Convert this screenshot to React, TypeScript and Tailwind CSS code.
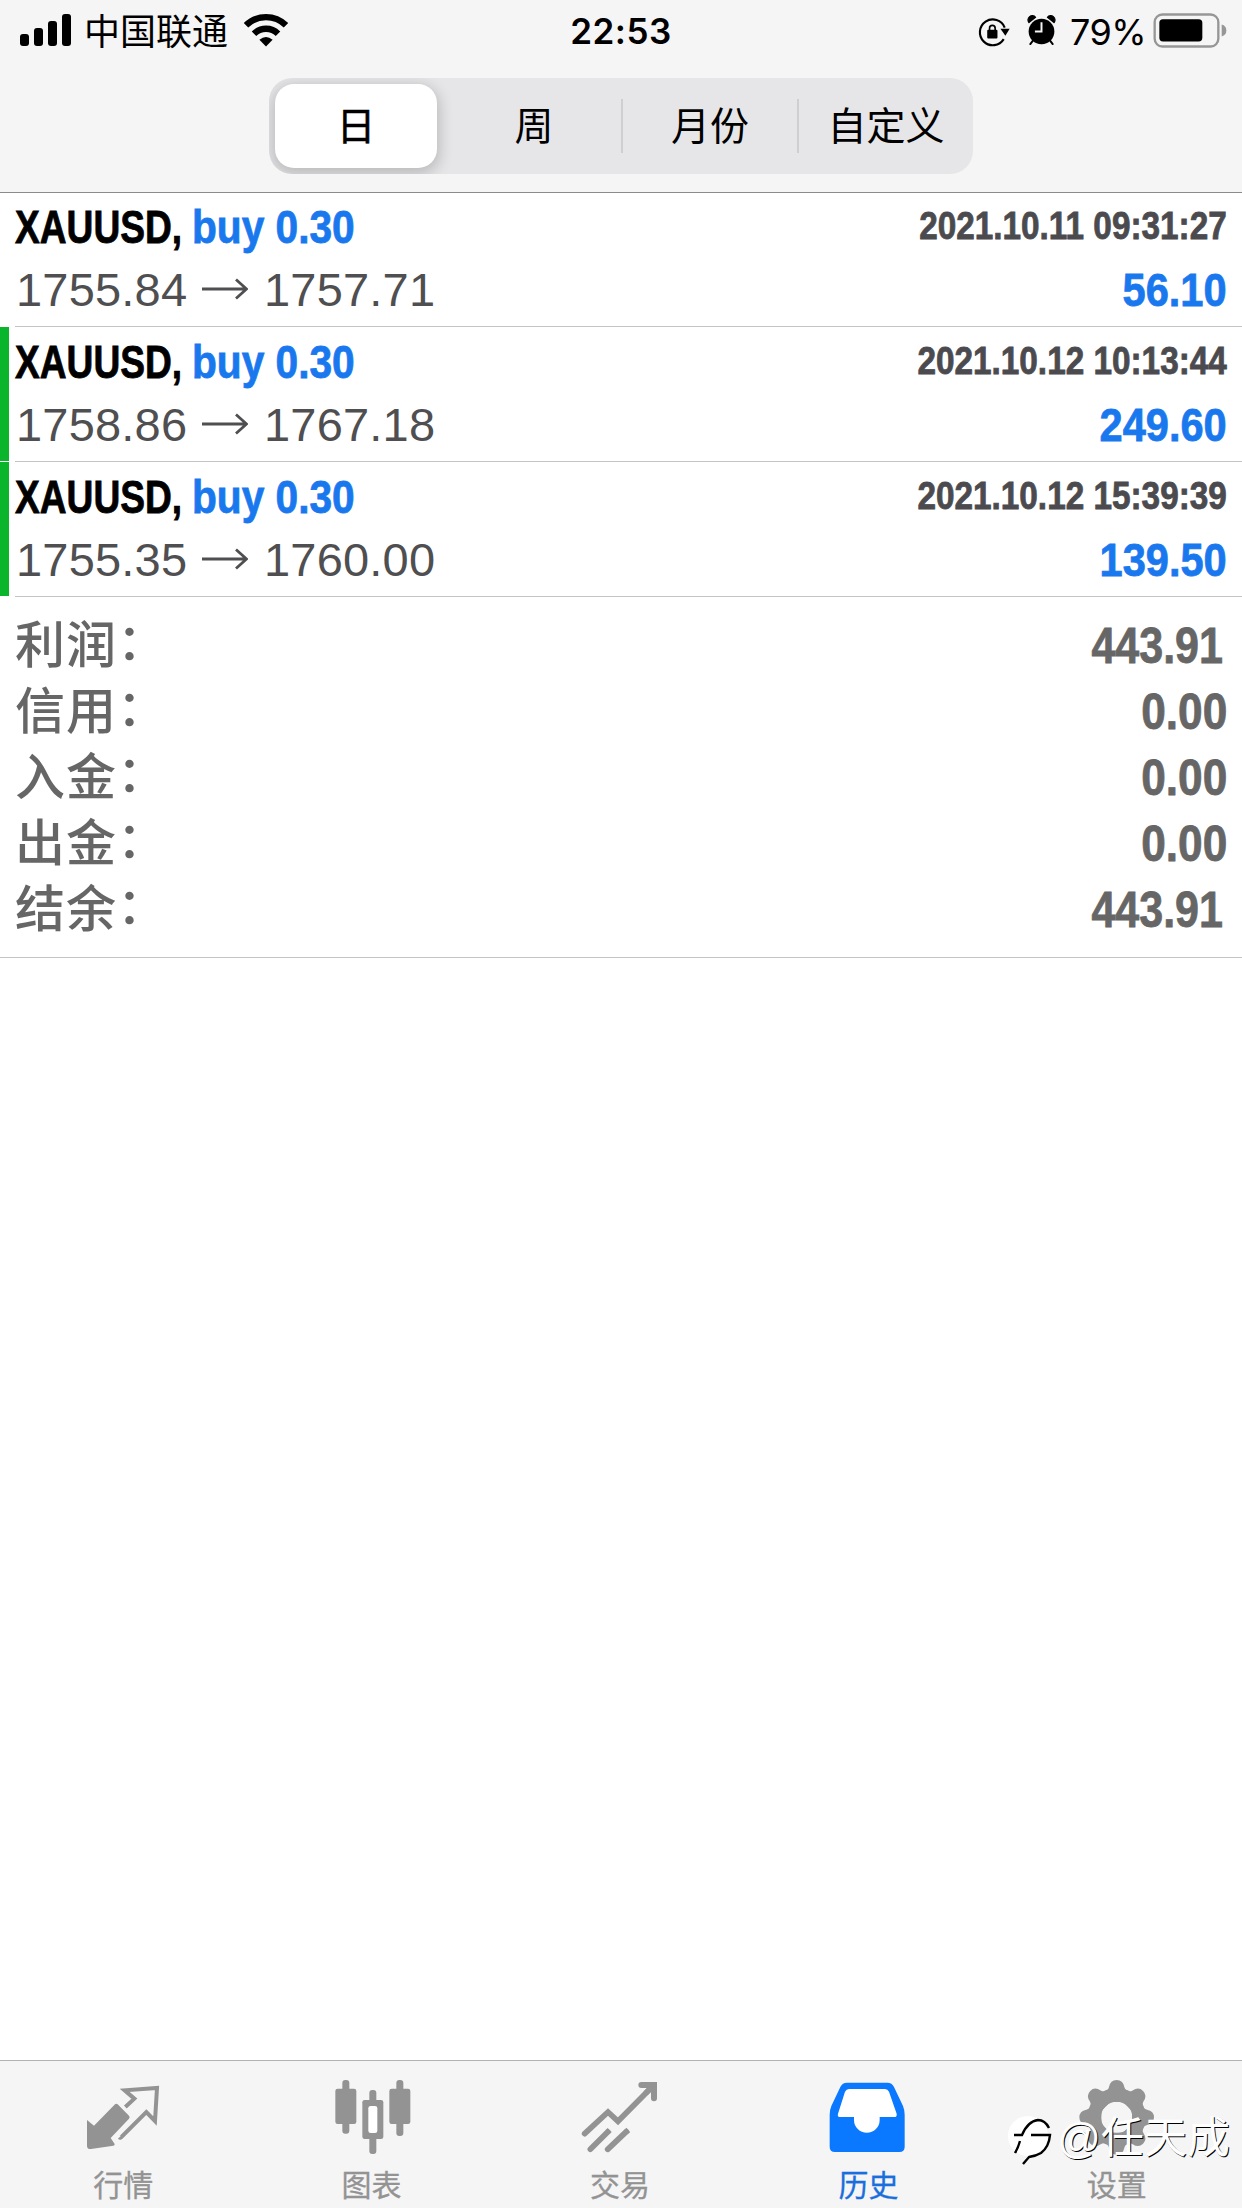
import type { ReactNode } from "react";
import clsx from "clsx";

interface Deal {
  symbol: string; side: string; open: string; close: string;
  time: string; profit: string; marked: boolean;
}

const deals: Deal[] = [
  { symbol: "XAUUSD,", side: "buy 0.30", open: "1755.84", close: "1757.71", time: "2021.10.11 09:31:27", profit: "56.10",  marked: false },
  { symbol: "XAUUSD,", side: "buy 0.30", open: "1758.86", close: "1767.18", time: "2021.10.12 10:13:44", profit: "249.60", marked: true },
  { symbol: "XAUUSD,", side: "buy 0.30", open: "1755.35", close: "1760.00", time: "2021.10.12 15:39:39", profit: "139.50", marked: true },
];

const summary = [
  { label: "利润", value: "443.91" },
  { label: "信用", value: "0.00" },
  { label: "入金", value: "0.00" },
  { label: "出金", value: "0.00" },
  { label: "结余", value: "443.91" },
];

const periods = ["日", "周", "月份", "自定义"];

function StatusBar() {
  return (
    <div className="flex h-[62px] items-center text-black">
      <div className="flex flex-1 items-center pl-5">
        <svg width="51" height="34" viewBox="0 0 51 34" className="-mt-0.5 shrink-0">
          <rect x="0" y="21" width="9" height="12" rx="3" />
          <rect x="14" y="15" width="9" height="18" rx="3" />
          <rect x="28" y="8" width="9" height="25" rx="3" />
          <rect x="42" y="1" width="9" height="32" rx="3" />
        </svg>
        <span className="mt-[3px] ml-[13px] text-[36px] leading-[44px] whitespace-nowrap">中国联通</span>
        <svg width="46" height="34" viewBox="0 0 46 34" className="ml-[15px] -mt-0.5 shrink-0" fill="none" stroke="black" strokeWidth="6.4">
          <path d="M3 12.3a28.5 28.5 0 0 1 40 0" />
          <path d="M11 20.7a17 17 0 0 1 24 0" />
          <path d="M23 33.5l-6.600-6.800q6.600-5.400 13.200 0z" fill="black" stroke="none" />
        </svg>
      </div>
      <span className="mr-[5px] font-['Inter'] text-[35px] font-semibold tracking-[0.5px]">22:53</span>
      <div className="flex flex-1 items-center justify-end pr-[15px]">
        <svg width="33" height="33" viewBox="50 30 100 100">
          <path d="M131 103A39 39 0 1 1 134 68" fill="none" stroke="black" strokeWidth="6.500" />
          <path d="M121 72h28l-13 21z" />
          <rect x="81" y="75" width="31" height="26" rx="3" />
          <path d="M88 79v-9a8.500 8.500 0 0 1 17 0v9" fill="none" stroke="black" strokeWidth="5" />
        </svg>
        <svg width="29" height="33" viewBox="200 30 86 100" className="ml-[17px] mt-px">
          <circle cx="243" cy="80" r="39" />
          <path d="M205 53a12 12 0 0 1 20-16zM281 53a12 12 0 0 0-20-16z" stroke="black" strokeWidth="4" strokeLinejoin="round" />
          <path d="M217 108l-8 10M269 108l8 10" stroke="black" strokeWidth="6" strokeLinecap="round" />
          <path d="M243 52v28h-20" fill="none" stroke="#f5f5f5" strokeWidth="6" />
        </svg>
        <span className="mt-0.5 ml-[14px] w-[78px] font-['Inter'] text-[36px] tracking-[-0.5px] whitespace-nowrap">79%</span>
        <svg width="74" height="37" viewBox="578 20 222 110" className="ml-[5px] -mt-0.5">
          <rect x="583" y="27" width="191" height="96" rx="23" fill="none" stroke="#969696" strokeWidth="7" />
          <rect x="597" y="41" width="129" height="67" rx="11" />
          <path d="M784 57q14 4 14 18t-14 18z" fill="#969696" />
        </svg>
      </div>
    </div>
  );
}

function PeriodSwitch() {
  return (
    <div className="mx-auto mt-4 flex h-24 w-[704px] overflow-hidden rounded-[23px] bg-[#e6e6e8] text-[39px] text-black">
      {periods.map((p, i) => (
        <div key={p} className="flex flex-1 items-center">
          {i === 0 ? (
            <div className="ml-[6px] flex h-[84px] w-[162px] items-center justify-center rounded-[19px] bg-white pt-[3px] shadow-[0_4px_14px_3px_rgba(0,0,0,0.18)] [-webkit-text-stroke:0.5px_black]">
              {p}
            </div>
          ) : (
            <>
              <div className={clsx("h-[54px] w-0.5", i > 1 && "bg-[#cfcfd2]")} />
              <div className="flex-1 pt-[3px] text-center">{p}</div>
            </>
          )}
        </div>
      ))}
    </div>
  );
}

function DealRow({ deal, first }: { deal: Deal; first: boolean }) {
  return (
    <div className={clsx("flex gap-[6px]", first ? "h-[134px]" : "h-[135px]")}>
      <div className={clsx("mb-px w-[9px]", deal.marked && "bg-[#0bb52b]")} />
      <div className="flex flex-1 flex-col justify-end border-b border-[#c4c4c6] pr-[15px] pb-[5px] text-[47px] leading-[63px] whitespace-nowrap">
        <div className="flex justify-between font-bold [-webkit-text-stroke:0.8px_currentColor]">
          <div className="flex">
            <span className="w-[177px]">
              <span className="inline-block origin-left scale-x-[0.79] text-black">{deal.symbol}</span>
            </span>
            <span className="inline-block origin-left scale-x-[0.865] text-[#1a78ee]">{deal.side}</span>
          </div>
          <span className="inline-block origin-right scale-x-[0.877] text-[38px] text-[#4b4b4f]">{deal.time}</span>
        </div>
        <div className="flex justify-between">
          <div className="flex items-center pl-px text-[#4f4f51]">
            <span className="w-[186px] tracking-[0.2px]">{deal.open}</span>
            <svg width="46" height="22" viewBox="0 0 46 22" fill="none" stroke="#4f4f51" strokeWidth="2.800" className="-mt-0.5">
              <path d="M0 11h44M34 1.500L44.500 11 34 20.500" />
            </svg>
            <span className="ml-[16px] tracking-[0.2px]">{deal.close}</span>
          </div>
          <span className="inline-block origin-right scale-x-[0.885] font-bold text-[#1a78ee] [-webkit-text-stroke:0.8px_currentColor]">{deal.profit}</span>
        </div>
      </div>
    </div>
  );
}

const icons: Record<string, ReactNode> = {
  quotes: (
    <svg width="80" height="107" viewBox="252 33 240 321" fill="currentColor">
      <path d="M345 163q4-3 8 0l34 34q4 5 0 9l-55 58 12 18q1 4-4 5l-67 10q-12 1-12-10v-77l21 17z" />
      <path d="M376 171l27-25-29-25 97-7-6 99-26-27-75 75q-3 4-6 1" fill="none" stroke="currentColor" strokeWidth="12" />
    </svg>
  ),
  charts: (
    <svg width="80" height="107" viewBox="998 33 240 321" fill="currentColor">
      <rect x="1005" y="116" width="63" height="106" rx="7" />
      <rect x="1026" y="90" width="21" height="161" rx="9" />
      <rect x="1167" y="116" width="63" height="106" rx="7" />
      <rect x="1188" y="90" width="21" height="168" rx="9" />
      <rect x="1107" y="120" width="21" height="40" rx="9" />
      <rect x="1107" y="255" width="21" height="57" rx="9" />
      <rect x="1086" y="150" width="63" height="117" rx="7" />
      <rect x="1104" y="168" width="27" height="81" rx="7" fill="white" />
    </svg>
  ),
  trade: (
    <svg width="80" height="107" viewBox="123 33 240 321" fill="none" stroke="currentColor" strokeWidth="17" strokeLinecap="round">
      <path d="M134 251l70-65 30 28L338 109" />
      <path d="M304 105h38v40" strokeWidth="18" />
      <path d="M342 105l-22 22" />
      <path d="M151 298l52-52M203 298l56-53" />
      <path d="M203 246l6-6M259 245l6-5" strokeLinecap="butt" />
    </svg>
  ),
  history: (
    <svg width="80" height="107" viewBox="868 33 240 321" fill="currentColor">
      <path d="M922 98h121q14 0 20 13l27 57q5 12 5 26v96q0 16-16 16H886q-16 0-16-16v-96q0-14 5-26l27-57q6-13 20-13z" />
      <path d="M928 117h108q8 0 12 8l23 66q2 10-8 10h-43v9a38 38 0 0 1-77 0v-9h-41q-10 0-7-10l21-66q4-8 12-8z" fill="white" />
    </svg>
  ),
  settings: (
    <svg width="80" height="107" viewBox="353 33 240 321" fill="currentColor">
      {[0, 45, 90, 135, 180, 225, 270, 315].map((a) => (
        <path key={a} d="M431 126q12-4 15-15 4-21 23-21t23 21q3 11 15 15v30h-76z" transform={`rotate(${a} 469 202)`} />
      ))}
      <circle cx="469" cy="202" r="67" fill="none" stroke="currentColor" strokeWidth="40" />
    </svg>
  ),
};

const tabs = [
  { icon: "quotes",   label: "行情" },
  { icon: "charts",   label: "图表" },
  { icon: "trade",    label: "交易" },
  { icon: "history",  label: "历史", active: true },
  { icon: "settings", label: "设置" },
];

function TabBar() {
  return (
    <div className="relative flex h-[148px] border-t border-[#b2b2b2] bg-[#f5f5f5]">
      {tabs.map((t) => (
        <div key={t.label} className={clsx("flex flex-1 flex-col items-center", t.active ? "text-[#0a78ff]" : "text-[#939393]")}>
          {icons[t.icon]}
          <span className={clsx("pr-0.5 text-[30px] leading-9 [-webkit-text-stroke:0.3px_currentColor]", t.active && "text-[#1a6fdc]")}>
            {t.label}
          </span>
        </div>
      ))}

      {/* Author watermark */}
      <div className="absolute top-[48px] right-[12px] flex h-[58px] items-center">
        <svg width="46" height="54" viewBox="0 0 46 54" fill="none" className="mt-1 mr-[3px]">
          <circle cx="20" cy="23" r="20" fill="white" />
          <path d="M6 22h8q6-14 16-15 7 0 11 8" stroke="black" strokeWidth="2.400" />
          <path d="M7 40q3-5 5-12M23 22h19q-1 12-9 18-5 3-12 4l-6 7" stroke="black" strokeWidth="2.400" />
        </svg>
        <span className="text-[43px] leading-[58px] whitespace-nowrap text-white [text-shadow:1px_1px_0_black]">@任天成</span>
      </div>
    </div>
  );
}

export default function App() {
  return (
    <div className="flex h-[2208px] w-[1242px] flex-col overflow-hidden bg-white font-['Liberation_Sans','Noto_Sans_CJK_SC',sans-serif]">
      <div className="h-[193px] border-b border-[#8c8a8c] bg-[#f5f5f5]">
        <StatusBar />
        <PeriodSwitch />
      </div>

      <div className="flex-1">
        {deals.map((d, i) => <DealRow key={d.time} deal={d} first={i === 0} />)}

        {/* Totals */}
        <div className="h-[361px] border-b border-[#c4c4c6] px-[15px] pt-4 text-[50px] leading-[66px] text-[#666]">
          {summary.map((s) => (
            <div key={s.label} className="flex h-[66px] justify-between">
              <span className="font-medium tracking-[1px]">
                {s.label}
                <span className="relative -top-[3px]">：</span>
              </span>
              <span className={clsx(
                "inline-block origin-right font-bold [-webkit-text-stroke:0.8px_currentColor]",
                s.value.endsWith("1") ? "mr-1 scale-x-[0.86]" : "scale-x-[0.885]"
              )}>
                {s.value}
              </span>
            </div>
          ))}
        </div>
      </div>

      <TabBar />
    </div>
  );
}
